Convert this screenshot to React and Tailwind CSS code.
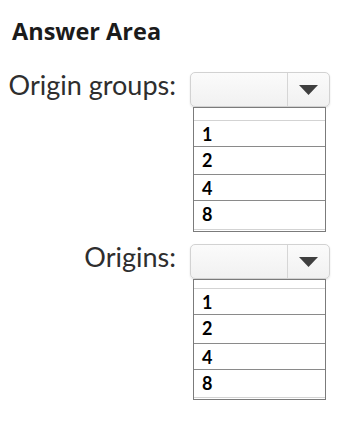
import React from "react";

const options = ["1", "2", "4", "8"];

function Arrow() {
  return (
    <svg width="19" height="10" viewBox="0 0 19 10">
      <polygon points="0,0 19,0 9.5,10" fill="#3f3f3f" />
    </svg>
  );
}

function DropBox() {
  return (
    <div className="flex h-[35px] w-[140px] rounded-[5px] border border-[#d2d2d2] bg-gradient-to-b from-[#fbfbfb] to-[#f1f1f1] shadow-[0_1px_2px_rgba(0,0,0,0.12)]">
      <div className="w-[96px]" />
      <div className="flex flex-1 items-center justify-center border-l border-[#d6d6d6]">
        <Arrow />
      </div>
    </div>
  );
}

function OptionList({ top, rows, last }) {
  return (
    <div className="ml-[3px] w-[133px] border border-[#7b7b7b] bg-white font-['Lato',sans-serif] text-[18px] font-bold text-black">
      <div style={{ height: top }} className="border-b border-[#d3d3d3]" />
      {options.map((opt, i) => (
        <div
          key={opt}
          style={{ height: rows[i] }}
          className={
            i < options.length - 1
              ? "border-b border-[#8a8a8a] pl-[8px] leading-[26px]"
              : "border-b border-[#d3d3d3] pl-[8px] leading-[26px]"
          }
        >
          {opt}
        </div>
      ))}
      <div style={{ height: last }} />
    </div>
  );
}

function Group({ label, listTop, rows }) {
  return (
    <div className="flex items-start">
      <div className="w-[176px] text-right font-['Lato',sans-serif] text-[27px] leading-[25px] text-[#2e2e2e]">
        {label}
      </div>
      <div className="ml-[14px] flex flex-col">
        <DropBox />
        <OptionList top={listTop} rows={rows} last={1} />
      </div>
    </div>
  );
}

export default function App() {
  return (
    <div className="h-[428px] w-[351px] overflow-hidden bg-white">
      <h1 className="pl-[12px] pt-[15px] font-['Open_Sans',sans-serif] text-[23.5px] font-bold leading-[32px] text-[#1b1b1b]">
        Answer Area
      </h1>

      <div className="mt-[25px]">
        <Group label="Origin groups:" listTop={13} rows={[26, 28, 26, 29]} />
      </div>

      <div className="mt-[12px]">
        <Group label="Origins:" listTop={9} rows={[26, 29, 26, 28]} />
      </div>
    </div>
  );
}
